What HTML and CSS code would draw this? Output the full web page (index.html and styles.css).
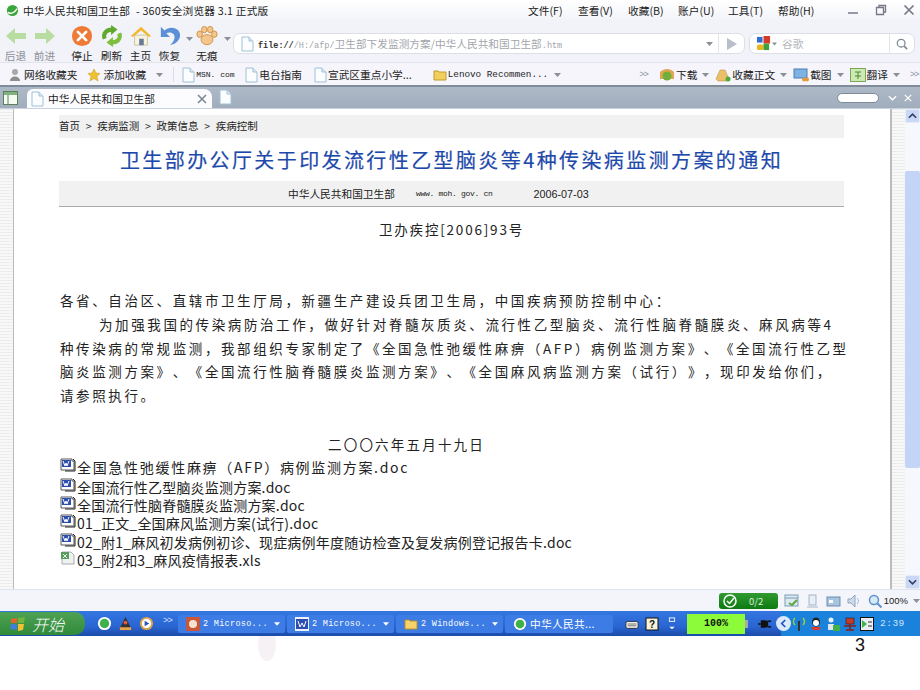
FILE: index.html
```html
<!DOCTYPE html>
<html lang="zh-CN">
<head>
<meta charset="UTF-8">
<title>中华人民共和国卫生部</title>
<link rel="stylesheet" href="styles.css">
</head>
<body>
<svg class="defs" width="0" height="0">
  <symbol id="doc" viewBox="0 0 14 16"><path d="M2 1h7l4 4v10H2z" fill="#fbfdff" stroke="#9fc0d8"/><path d="M9 1v4h4" fill="#dcebf5" stroke="#9fc0d8"/></symbol>
  <symbol id="word" viewBox="0 0 16 14"><path d="M1 1h11v2h2v9H1z" fill="#fff" stroke="#555"/><rect x="2" y="2" width="9" height="7" fill="#2d4fb0"/><path d="M3 3l2 5 1-3 1 3 2-5" fill="none" stroke="#fff"/><path d="M13 1l2 2v10H5" fill="none" stroke="#222"/></symbol>
  <symbol id="xls" viewBox="0 0 16 14"><path d="M2 1h9l3 3v9H2z" fill="#eef2ee" stroke="#aab"/><rect x="1" y="1" width="8" height="7" fill="#5b9a62"/><path d="M3 3l4 4M7 3l-4 4" stroke="#dfd"/></symbol>
  <symbol id="caret" viewBox="0 0 7 4"><path d="M0 0h7L3.500 4z" fill="currentColor"/></symbol>
</svg>

<div class="screen">

  <div class="titlebar">
    <svg class="title-logo" viewBox="0 0 14 14"><circle cx="7" cy="7" r="6" fill="#3aa53a"/><path d="M2 9c3 2 7 1 10-4" fill="none" stroke="#fff" stroke-width="1.500"/></svg>
    <span class="title-site">中华人民共和国卫生部</span>
    <span class="title-app">- 360安全浏览器 3.1 正式版</span>
    <div class="menu">
      <span>文件(F)</span><span>查看(V)</span><span>收藏(B)</span><span>账户(U)</span><span>工具(T)</span><span>帮助(H)</span>
    </div>
    <div class="winbtns">
      <svg viewBox="0 0 12 12"><path d="M1 9h10" stroke="#778" stroke-width="1.500"/></svg>
      <svg viewBox="0 0 12 12"><path d="M1.500 3.500h7v7h-7zM4 3V1.500h6.500V8H9" fill="none" stroke="#778" stroke-width="1.300"/></svg>
      <svg viewBox="0 0 12 12"><path d="M1.500 1.500l9 9M10.500 1.500l-9 9" stroke="#778" stroke-width="1.700"/></svg>
    </div>
  </div>

  <div class="toolbar">
    <div class="navbtn off">
      <svg viewBox="0 0 24 20"><path d="M11 2L2 10l9 8v-5h11V7H11z" fill="#b9dca0"/></svg>
      <span>后退</span>
    </div>
    <div class="navbtn off">
      <svg viewBox="0 0 24 20"><path d="M13 2l9 8-9 8v-5H2V7h11z" fill="#b9dca0"/></svg>
      <span>前进</span>
    </div>
    <div class="navbtn stop">
      <svg viewBox="0 0 24 24"><circle cx="12" cy="12" r="11" fill="#ee7a35"/><path d="M7.500 7.500l9 9M16.500 7.500l-9 9" stroke="#fff" stroke-width="3" stroke-linecap="round"/></svg>
      <span>停止</span>
    </div>
    <div class="navbtn">
      <svg viewBox="0 0 24 24"><path d="M4 15C2 9 6 5 12 5" fill="none" stroke="#5fa92c" stroke-width="4.500"/><path d="M11 0l7 5-7 6z" fill="#5fa92c"/><path d="M20 9c2 6-2 10-8 10" fill="none" stroke="#7cc03d" stroke-width="4.500"/><path d="M13 13l-7 6 7 5z" fill="#7cc03d"/></svg>
      <span>刷新</span>
    </div>
    <div class="navbtn">
      <svg viewBox="0 0 24 24"><path d="M5 11v11h14V11z" fill="#f8f3dc" stroke="#c9c2a0"/><rect x="10" y="15" width="5" height="7" fill="#667a99"/><path d="M1 12L12 2l11 10-2 1-9-7-9 7z" fill="#f2b92e"/></svg>
      <span>主页</span>
    </div>
    <div class="navbtn">
      <svg viewBox="0 0 24 24"><path d="M2 2v11h10L8 9c4-2 9 0 9 4 0 4-3 7-5 9 6-1 11-5 11-11C23 4 13 0 6 6z" fill="#5b8fd6"/></svg>
      <span>恢复</span>
    </div>
    <svg class="caret caret-nav"><use href="#caret"/></svg>
    <div class="navbtn incognito">
      <svg viewBox="0 0 24 24"><ellipse cx="12" cy="16" rx="6.500" ry="5.500" fill="#f3c68c" stroke="#cf8f45"/><ellipse cx="4" cy="10" rx="3" ry="3.500" fill="#f3c68c" stroke="#cf8f45"/><ellipse cx="20" cy="10" rx="3" ry="3.500" fill="#f3c68c" stroke="#cf8f45"/><ellipse cx="9" cy="5" rx="3" ry="3.500" fill="#f3c68c" stroke="#cf8f45"/><ellipse cx="15.500" cy="5" rx="3" ry="3.500" fill="#f3c68c" stroke="#cf8f45"/></svg>
      <span>无痕</span>
    </div>
    <svg class="caret caret-nav"><use href="#caret"/></svg>
    <div class="address">
      <svg class="doc-ico"><use href="#doc"/></svg>
      <span class="url"><b>file://</b><em>/H:/afp/</em>卫生部下发监测方案/中华人民共和国卫生部<em>.htm</em></span>
      <svg class="caret caret-addr"><use href="#caret"/></svg>
      <div class="go"><svg viewBox="0 0 10 12"><path d="M0 0l10 6-10 6z" fill="#b6bfca"/></svg></div>
    </div>
    <div class="search">
      <svg class="g-logo" viewBox="0 0 16 16"><rect x="1" y="1" width="6" height="6" fill="#2f6fd1"/><rect x="8" y="0" width="7" height="8" fill="#d83a2a"/><rect x="1" y="9" width="7" height="6" fill="#e9b61b" rx="2"/><rect x="8" y="8" width="6" height="7" fill="#3fa03c"/></svg>
      <svg class="caret caret-g"><use href="#caret"/></svg>
      <span>谷歌</span>
      <div class="lens"><svg viewBox="0 0 14 14"><circle cx="6" cy="6" r="4.500" fill="none" stroke="#7d8a96" stroke-width="1.500"/><path d="M9.500 9.500l3.500 3.500" stroke="#7d8a96" stroke-width="2"/></svg></div>
    </div>
  </div>

  <div class="favbar">
    <svg class="fav-ico" viewBox="0 0 14 14"><circle cx="7" cy="4" r="3" fill="#a9a9a9"/><path d="M2 13c0-6 10-6 10 0z" fill="#8e8e8e"/></svg>
    <span class="fav">网络收藏夹</span>
    <svg class="fav-ico star" viewBox="0 0 14 14"><path d="M7 1l2 4 4 .5-3 3 1 4.500-4-2.500L3 13l1-4.500-3-3L5 5z" fill="#f0c030" stroke="#c99a10" stroke-width=".5"/></svg>
    <span class="fav">添加收藏</span>
    <svg class="caret caret-add"><use href="#caret"/></svg>
    <i class="sep"></i>
    <svg class="doc-ico"><use href="#doc"/></svg><span class="fav msn">MSN. com</span>
    <svg class="doc-ico fav-doc"><use href="#doc"/></svg><span class="fav">电台指南</span>
    <svg class="doc-ico fav-doc"><use href="#doc"/></svg><span class="fav">宣武区重点小学...</span>
    <svg class="fav-ico folder" viewBox="0 0 14 12"><path d="M1 2h4l1 1h7v8H1z" fill="#f1cf5e" stroke="#c29a2b"/></svg>
    <span class="fav lenovo">Lenovo Recommen...</span>
    <svg class="caret caret-lenovo"><use href="#caret"/></svg>
    <span class="more more-a">&gt;&gt;</span>
    <div class="tools">
      <svg class="tool-ico" viewBox="0 0 16 14"><path d="M1 4c4-4 10-4 14 0v7H1z" fill="#e2a552"/><circle cx="8" cy="8" r="4.500" fill="#6fb03a"/></svg><span>下载</span><svg class="caret"><use href="#caret"/></svg>
      <svg class="tool-ico" viewBox="0 0 16 14"><path d="M5 2h5l4 9-2 2H3l-2-2z" fill="#e9bf6a" stroke="#b98a32" stroke-width=".5"/><circle cx="13" cy="11" r="2.500" fill="#4fa83a"/></svg><span>收藏正文</span><svg class="caret"><use href="#caret"/></svg>
      <svg class="tool-ico" viewBox="0 0 16 14"><rect x="1" y="1" width="13" height="9" fill="#7db2e2" stroke="#4d7fb5"/><circle cx="11" cy="11.500" r="2" fill="#e39a3a"/><circle cx="14" cy="11.500" r="2" fill="#e39a3a"/></svg><span>截图</span><svg class="caret"><use href="#caret"/></svg>
      <svg class="tool-ico" viewBox="0 0 16 14"><rect x=".5" y=".5" width="15" height="13" fill="#cfe9b2" stroke="#7aa85a"/><path d="M5 4h6M8 4v7M5 8h6" stroke="#4a8a35"/></svg><span>翻译</span><svg class="caret"><use href="#caret"/></svg>
      <span class="more">&gt;&gt;</span>
    </div>
  </div>

  <div class="tabbar">
    <svg class="panel-ico" viewBox="0 0 15 14"><rect x=".5" y=".5" width="14" height="13" fill="#f6fbf2" stroke="#5c7f5c"/><rect x="1" y="1" width="13" height="3" fill="#7fb27f"/><path d="M5 4v9" stroke="#5c7f5c"/></svg>
    <div class="tab">
      <svg class="doc-ico"><use href="#doc"/></svg>
      <span>中华人民共和国卫生部</span>
      <svg class="tab-x" viewBox="0 0 10 10"><path d="M1 1l8 8M9 1L1 9" stroke="#7b8794" stroke-width="1.600"/></svg>
    </div>
    <svg class="doc-ico newtab"><use href="#doc"/></svg>
    <div class="tab-right">
      <i class="pill"></i>
      <svg viewBox="0 0 10 6" class="chev"><path d="M1 1l4 4 4-4" fill="none" stroke="#fff" stroke-width="1.500"/></svg>
      <svg viewBox="0 0 10 10" class="closeall"><path d="M1 1l8 8M9 1L1 9" stroke="#fff" stroke-width="1.500"/></svg>
    </div>
  </div>

  <div class="viewport">
    <div class="gutter"></div>
    <div class="page">
      <div class="crumbs">首页 &nbsp;&gt;&nbsp; 疾病监测 &nbsp;&gt;&nbsp; 政策信息 &nbsp;&gt;&nbsp; 疾病控制</div>
      <h1>卫生部办公厅关于印发流行性乙型脑炎等4种传染病监测方案的通知</h1>
      <div class="source"><span>中华人民共和国卫生部</span><span class="site">www. moh. gov. cn</span><span class="date">2006-07-03</span></div>
      <p class="docno">卫办疾控[2006]93号</p>
      <div class="body-text">
        <p>各省、自治区、直辖市卫生厅局，新疆生产建设兵团卫生局，中国疾病预防控制中心：</p>
        <p class="indent">为加强我国的传染病防治工作，做好针对脊髓灰质炎、流行性乙型脑炎、流行性脑脊髓膜炎、麻风病等4</p>
        <p>种传染病的常规监测，我部组织专家制定了《全国急性弛缓性麻痹（AFP）病例监测方案》、《全国流行性乙型</p>
        <p>脑炎监测方案》、《全国流行性脑脊髓膜炎监测方案》、《全国麻风病监测方案（试行）》，现印发给你们，</p>
        <p>请参照执行。</p>
      </div>
      <p class="signdate">二〇〇六年五月十九日</p>
      <ul class="files">
        <li class="first"><svg><use href="#word"/></svg>全国急性弛缓性麻痹（AFP）病例监测方案.doc</li>
        <li><svg><use href="#word"/></svg>全国流行性乙型脑炎监测方案.doc</li>
        <li><svg><use href="#word"/></svg>全国流行性脑脊髓膜炎监测方案.doc</li>
        <li><svg><use href="#word"/></svg>01_正文_全国麻风监测方案(试行).doc</li>
        <li><svg><use href="#word"/></svg>02_附1_麻风初发病例初诊、现症病例年度随访检查及复发病例登记报告卡.doc</li>
        <li><svg><use href="#xls"/></svg>03_附2和3_麻风疫情报表.xls</li>
      </ul>
    </div>
    <div class="stripe"></div>
    <div class="scrollbar">
      <div class="sb-btn"><svg viewBox="0 0 10 6"><path d="M1 5l4-4 4 4" fill="none" stroke="#333f66" stroke-width="1.800"/></svg></div>
      <div class="sb-track"><div class="sb-thumb"></div></div>
      <div class="sb-btn"><svg viewBox="0 0 10 6"><path d="M1 1l4 4 4-4" fill="none" stroke="#333f66" stroke-width="1.800"/></svg></div>
    </div>
  </div>

  <div class="statusbar">
    <div class="safe">
      <svg viewBox="0 0 14 14"><circle cx="7" cy="7" r="6" fill="none" stroke="#fff" stroke-width="1.500"/><path d="M4 7l2.500 2.500L11 4" fill="none" stroke="#fff" stroke-width="1.500"/></svg>
      <span>0/2</span>
    </div>
    <svg class="st-ico" viewBox="0 0 15 14"><rect x="1" y="1" width="13" height="11" fill="#dceaf2" stroke="#7e9cb5"/><path d="M1 4h13" stroke="#7e9cb5"/><path d="M5 9l3 2 5-5" stroke="#5aa83a" stroke-width="2" fill="none"/></svg>
    <svg class="st-ico" viewBox="0 0 15 14"><rect x="4" y="1" width="7" height="10" fill="#e8eef5" stroke="#a4b4c6"/><path d="M2 13h11" stroke="#a4b4c6"/></svg>
    <svg class="st-ico" viewBox="0 0 15 14"><rect x="1" y="3" width="13" height="9" fill="#a9c4de" stroke="#6a8cae"/><rect x="3" y="6" width="4" height="3" fill="#fff"/></svg>
    <svg class="st-ico" viewBox="0 0 15 14"><path d="M1 5h3l4-4v12L4 9H1z" fill="#cfdbe8" stroke="#8ea6bf"/><path d="M10 4c2 2 2 4 0 6" fill="none" stroke="#a7bacd"/></svg>
    <svg class="st-ico zoom-ico" viewBox="0 0 15 14"><circle cx="6" cy="6" r="4.500" fill="#d7e8f7" stroke="#5a93cc" stroke-width="1.500"/><path d="M9.500 9.500l4 4" stroke="#5a93cc" stroke-width="2"/></svg>
    <span class="zoom-val">100%</span>
    <svg class="caret caret-zoom"><use href="#caret"/></svg>
  </div>

  <div class="taskbar">
    <div class="start">
      <svg viewBox="0 0 16 16"><path d="M1 3l6-1v5H1z" fill="#e8632c"/><path d="M8 2l7-1-1 6H8z" fill="#6fb43c"/><path d="M1 8h6v6l-7-1z" fill="#3f7fd8"/><path d="M8 8h6l-1 6-5 1z" fill="#f3c230"/></svg>
      <span>开始</span>
    </div>
    <div class="quick">
      <svg viewBox="0 0 16 16"><circle cx="8" cy="8" r="7" fill="#fff"/><circle cx="8" cy="8" r="5" fill="#3fb04a"/></svg>
      <svg viewBox="0 0 16 16"><path d="M8 1l6 12H2z" fill="#333"/><path d="M2 12h12v3H2z" fill="#e8a24a"/><circle cx="8" cy="7" r="2" fill="#e85a3a"/></svg>
      <svg viewBox="0 0 16 16"><circle cx="8" cy="8" r="7" fill="#d9a24a"/><circle cx="8" cy="8" r="5" fill="#fff"/><path d="M6 5l5 3-5 3z" fill="#2a55b0"/></svg>
    </div>
    <span class="more task-more">&gt;&gt;</span>
    <div class="tasks">
      <div class="task"><svg viewBox="0 0 14 14"><rect width="14" height="14" fill="#c8563a"/><circle cx="7" cy="7" r="4" fill="#f5e3d0"/></svg><span>2 Microso...</span><svg class="caret caret-task"><use href="#caret"/></svg></div>
      <div class="task"><svg viewBox="0 0 14 14"><rect width="14" height="14" fill="#eef2fa"/><rect x="1" y="2" width="12" height="10" fill="#2d4fb0"/><path d="M3 4l2 6 2-4 2 4 2-6" fill="none" stroke="#fff"/></svg><span>2 Microso...</span><svg class="caret caret-task"><use href="#caret"/></svg></div>
      <div class="task"><svg viewBox="0 0 14 12"><path d="M1 2h4l1 1h7v8H1z" fill="#f5d36a" stroke="#b8912a"/></svg><span>2 Windows...</span><svg class="caret caret-task"><use href="#caret"/></svg></div>
      <div class="task task-cn"><svg viewBox="0 0 16 16"><circle cx="8" cy="8" r="7" fill="#fff"/><circle cx="8" cy="8" r="5" fill="#3fb04a"/></svg><span>中华人民共...</span></div>
    </div>
    <div class="mid-icons">
      <svg viewBox="0 0 16 12"><rect x="1" y="3" width="14" height="8" rx="2" fill="#eee" stroke="#222"/><path d="M3 6h10M3 8h10" stroke="#666"/></svg>
      <svg viewBox="0 0 14 14"><rect x="1" y="1" width="12" height="12" fill="#f6f3d8" stroke="#111"/><text x="7" y="11" text-anchor="middle" class="qm">?</text></svg>
      <svg viewBox="0 0 12 16"><rect x="3" y="1" width="6" height="4" fill="none" stroke="#fff"/><path d="M3 11h6l-3 3z" fill="#fff"/></svg>
    </div>
    <div class="battery">100%</div><i class="nub"></i>
    <svg class="plug" viewBox="0 0 16 12"><path d="M1 6h3M11 3h4M11 9h4" stroke="#111" stroke-width="1.500"/><path d="M4 2h4c3 0 4 2 4 4s-1 4-4 4H4z" fill="#111"/></svg>
    <div class="tray">
      <div class="tray-open"><svg viewBox="0 0 8 10"><path d="M6 1L2 5l4 4" fill="none" stroke="#1e58c0" stroke-width="2"/></svg></div>
      <svg viewBox="0 0 14 14"><path d="M7 4v10" stroke="#333" stroke-width="2"/><path d="M3 1C1 3 1 6 3 8M11 1c2 2 2 5 0 7" fill="none" stroke="#9ccc3c" stroke-width="1.500"/></svg>
      <svg viewBox="0 0 14 14"><ellipse cx="7" cy="5" rx="4" ry="4.500" fill="#222"/><ellipse cx="7" cy="6" rx="3" ry="3" fill="#fff"/><path d="M2 10h10l-2 3H4z" fill="#e23a2a"/></svg>
      <svg viewBox="0 0 14 14"><circle cx="5" cy="3" r="2.500" fill="#e8eef5"/><path d="M2 13V7h6v6z" fill="#dfe6ef"/><rect x="7" y="8" width="7" height="6" fill="#3fb04a"/></svg>
      <svg viewBox="0 0 14 14"><rect x="3" y="1" width="8" height="6" fill="#c43a2a" stroke="#111" stroke-width=".5"/><path d="M1 9h12M7 7v6M3 13h8" stroke="#8a1f14" stroke-width="1.500"/></svg>
      <svg viewBox="0 0 14 14"><rect width="14" height="14" fill="#111"/><rect x="1" y="1" width="12" height="12" fill="#e8eef5"/><path d="M2 3l5 4-5 4z" fill="#3fb04a"/><path d="M8 5h4M8 9h4" stroke="#333"/></svg>
      <span class="clock">2:39</span>
    </div>
  </div>

  <div class="foot">
    <i class="ghost"></i>
    <span class="slide-no">3</span>
  </div>

</div>
</body>
</html>
```

FILE: styles.css
```css
html, body {
  margin: 0;
  padding: 0;
  background: white;
}

body {
  font-family: "Noto Sans CJK SC", "Liberation Sans", sans-serif;
  color: #222;
  text-spacing-trim: space-all;
}

p, h1, ul {
  margin: 0;
  padding: 0;
}

.defs {
  position: absolute;
}

.screen {
  width: 920px;
  height: 690px;
  display: flex;
  flex-direction: column;
  overflow: hidden;
  position: relative;
}

.caret {
  width: 7px;
  height: 4px;
  color: #8b8f98;
  flex: none;
}

.doc-ico {
  width: 14px;
  height: 16px;
  flex: none;
}

.more {
  font-size: 9px;
  color: #8f96a3;
  font-family: "Liberation Mono", monospace;
  letter-spacing: -1px;
}

/* title bar */
.titlebar {
  height: 20px;
  display: flex;
  align-items: center;
  padding-left: 6px;
  font-size: 10.700px;
  background: linear-gradient(#fff, #f3f4f9);
  white-space: nowrap;
}

.title-logo {
  width: 13px;
  height: 13px;
  margin-right: 4px;
}

.title-app {
  margin-left: 6px;
  letter-spacing: .2px;
}

.menu {
  margin-left: auto;
  margin-right: 19px;
  display: flex;
  width: 300px;
}

.menu span {
  width: 50px;
  flex: none;
}

.winbtns {
  display: flex;
  gap: 16px;
  margin-right: 5px;
}

.winbtns svg {
  width: 12px;
  height: 12px;
}

/* toolbar */
.toolbar {
  height: 43px;
  display: flex;
  align-items: center;
  padding: 5px 0 0 1px;
  background: #f2f3f9;
  border-bottom: 1px solid #e2e3ea;
  box-sizing: border-box;
}

.navbtn {
  width: 29px;
  display: flex;
  flex-direction: column;
  align-items: center;
  font-size: 10.700px;
  line-height: 13px;
  flex: none;
  gap: 2px;
}

.navbtn svg {
  width: 24px;
  height: 22px;
}

.navbtn.off {
  color: #8c9099;
}

.navbtn.stop {
  width: 30px;
  margin-left: 8px;
}

.navbtn.incognito {
  width: 30px;
  margin-left: -1px;
}

.caret-nav {
  margin: 0 0 10px 2px;
}

.address {
  width: 512px;
  height: 21px;
  margin-left: 2px;
  background: white;
  border: 1px solid #dcdfe7;
  border-radius: 7px;
  display: flex;
  align-items: center;
  box-sizing: border-box;
  padding-left: 6px;
  font-size: 10.700px;
}

.url {
  margin-left: 4px;
  color: #a2a6ab;
  flex: 1;
  white-space: nowrap;
  overflow: hidden;
}

.url b, .url em {
  font-style: normal;
  font-family: "Liberation Mono", monospace;
  font-size: 8.500px;
}

.url b {
  color: #333;
}

.caret-addr {
  margin-right: 5px;
}

.go {
  width: 25px;
  height: 100%;
  border-left: 1px solid #e3e5ea;
  display: flex;
  align-items: center;
  justify-content: center;
}

.go svg {
  width: 10px;
  height: 12px;
}

.search {
  width: 166px;
  height: 21px;
  margin-left: 4px;
  background: white;
  border: 1px solid #dcdfe7;
  border-radius: 7px;
  box-sizing: border-box;
  display: flex;
  align-items: center;
  padding-left: 6px;
  font-size: 10.700px;
  color: #b3b6bb;
}

.g-logo {
  width: 15px;
  height: 15px;
}

.caret-g {
  width: 5px;
  margin: 0 5px 0 1px;
}

.lens {
  margin-left: auto;
  width: 24px;
  height: 100%;
  border-left: 1px solid #e3e5ea;
  display: flex;
  align-items: center;
  justify-content: center;
}

.lens svg {
  width: 12px;
  height: 12px;
}

/* favourites bar */
.favbar {
  height: 24px;
  display: flex;
  align-items: center;
  padding: 1px 0 0 8px;
  font-size: 10.700px;
  background: #f5f5fb;
  box-sizing: border-box;
  border-bottom: 2px solid #7f8b99;
  white-space: nowrap;
}

.fav-ico {
  width: 14px;
  height: 14px;
  flex: none;
}

.fav {
  margin-left: 2px;
}

.star {
  margin-left: 10px;
}

.msn {
  margin-left: 1px;
  font-family: "Liberation Mono", monospace;
  font-size: 8px;
  width: 37px;
}

.lenovo {
  margin-left: 1px;
  font-family: "Liberation Mono", monospace;
  font-size: 9.300px;
}

.caret-add {
  margin-left: 10px;
}

.sep {
  width: 1px;
  height: 15px;
  background: #dadbe3;
  margin: 0 7px 0 10px;
}

.fav-doc {
  margin-left: 11px;
}

.fav-doc + .fav {
  margin-left: 1px;
}

.folder {
  margin-left: 21px;
}

.caret-lenovo {
  margin-left: 6px;
}

.more-a {
  margin-left: 78px;
}

.tools {
  margin-left: 5px;
  display: flex;
  align-items: center;
}

.tool-ico {
  width: 16px;
  height: 14px;
  margin-left: 6px;
}

.tools span {
  margin-left: 1px;
}

.tools .caret {
  margin-left: 5px;
}

.tools .more {
  margin-left: 10px;
}

/* tab bar */
.tabbar {
  height: 22px;
  display: flex;
  align-items: flex-end;
  background: linear-gradient(#aeb9c7, #a0adbc);
  padding-left: 3px;
  font-size: 10.700px;
  border-bottom: 1px solid #c9d2dc;
  box-sizing: border-box;
}

.panel-ico {
  width: 15px;
  height: 14px;
  margin: 0 9px 3px 0;
}

.tab {
  width: 185px;
  height: 19px;
  background: #fcfcfe;
  border-radius: 6px 8px 0 0;
  display: flex;
  align-items: center;
  padding-left: 3px;
  box-sizing: border-box;
}

.tab span {
  margin-left: 4px;
}

.tab-x {
  width: 10px;
  height: 10px;
  margin-left: auto;
  margin-right: 5px;
}

.newtab {
  margin: 0 0 3px 6px;
}

.tab-right {
  margin-left: auto;
  display: flex;
  align-items: center;
  height: 100%;
  padding-right: 8px;
}

.pill {
  width: 40px;
  height: 8px;
  border-radius: 5px;
  background: white;
  border: 1px solid #7f8b99;
}

.chev {
  width: 9px;
  height: 6px;
  margin-left: 9px;
}

.closeall {
  width: 8px;
  height: 8px;
  margin-left: 7px;
}

/* page area */
.viewport {
  height: 481px;
  display: flex;
  border-bottom: 1px solid #dfe5ee;
  box-sizing: border-box;
}

.gutter {
  width: 14px;
  background: repeating-linear-gradient(#ececec 0 1px, #f8f8f8 1px 3px);
  border-right: 1px solid #bbb;
  box-sizing: border-box;
  flex: none;
}

.page {
  flex: 1;
  padding: 6px 46px 0 45px;
  white-space: nowrap;
  overflow: hidden;
  font-size: 13.500px;
  min-width: 0;
}

.crumbs {
  height: 23px;
  line-height: 21px;
  background: #f1f1f1;
  font-size: 10.500px;
  word-spacing: .5px;
}

h1 {
  height: 43px;
  line-height: 44px;
  font-size: 20px;
  font-weight: normal;
  color: #1d49ab;
  text-align: center;
  letter-spacing: 2.400px;
  -webkit-text-stroke: .2px #1d49ab;
}

.source {
  height: 26px;
  box-sizing: border-box;
  background: #f1f1f1;
  border-bottom: 1px solid #aaa;
  display: flex;
  align-items: center;
  font-size: 10.700px;
  padding-left: 229px;
}

.site {
  margin-left: 21px;
  font-family: "Liberation Mono", monospace;
  font-size: 8px;
  letter-spacing: -.3px;
}

.date {
  margin-left: 41px;
  font-family: "Liberation Sans", sans-serif;
  font-size: 10.800px;
}

.docno {
  margin-top: 12px;
  text-align: center;
  height: 20px;
  line-height: 20px;
  letter-spacing: 1.800px;
}

.body-text {
  margin-top: 50px;
  letter-spacing: 2.600px;
}

.body-text p {
  height: 23.800px;
  line-height: 23.800px;
  margin-left: 1px;
}

.body-text .indent {
  padding-left: 39px;
}

.signdate {
  margin: 25px 0 0 269px;
  letter-spacing: 2.200px;
  height: 22px;
  line-height: 22px;
}

.files {
  list-style: none;
  margin-top: 1px;
}

.files li {
  height: 18.200px;
  line-height: 18.200px;
  display: flex;
  align-items: center;
  font-size: 14px;
  letter-spacing: .2px;
}

.files li.first {
  height: 22px;
  letter-spacing: 1.700px;
}

.files svg {
  width: 16px;
  height: 14px;
  flex: none;
  margin: -4px 1px 0 1px;
}

.stripe {
  width: 15px;
  flex: none;
  border-left: 2px solid #bbb;
  box-sizing: border-box;
  background: repeating-linear-gradient(#ececec 0 1px, #f8f8f8 1px 3px);
}

.scrollbar {
  width: 15px;
  flex: none;
  display: flex;
  flex-direction: column;
  background: #f6f8fd;
}

.sb-btn {
  height: 14px;
  flex: none;
  background: #c9d8f4;
  border: 1px solid #e4ecfa;
  box-sizing: border-box;
  border-radius: 2px;
  display: flex;
  align-items: center;
  justify-content: center;
}

.sb-btn svg {
  width: 9px;
  height: 6px;
}

.sb-track {
  flex: 1;
  padding-top: 48px;
}

.sb-thumb {
  height: 297px;
  background: #c3d4f6;
  border-radius: 2px;
}

/* status bar */
.statusbar {
  height: 21px;
  background: #f4f5fb;
  display: flex;
  align-items: center;
  padding-left: 719px;
  font-size: 9.500px;
  flex: none;
}

.safe {
  width: 59px;
  height: 16px;
  background: linear-gradient(#2f9a2f, #0d7a12);
  border-radius: 3px;
  display: flex;
  align-items: center;
  color: #dfeedd;
  padding-left: 4px;
  box-sizing: border-box;
}

.safe svg {
  width: 14px;
  height: 14px;
}

.safe span {
  margin-left: 12px;
}

.st-ico {
  width: 15px;
  height: 14px;
  margin-left: 6px;
}

.zoom-ico {
  margin-left: 6px;
}

.zoom-val {
  margin-left: 1px;
  font-family: "Liberation Sans", sans-serif;
}

.caret-zoom {
  margin-left: 5px;
}

/* taskbar */
.taskbar {
  height: 25px;
  flex: none;
  background: linear-gradient(#3476e0 0, #2a66d4 60%, #1b4ca8 100%);
  display: flex;
  align-items: center;
  color: white;
  font-size: 9.500px;
  position: relative;
  z-index: 1;
}

.start {
  width: 85px;
  height: 23px;
  flex: none;
  background: linear-gradient(#4fa253, #2f8a3a);
  border-radius: 0 10px 10px 0;
  display: flex;
  align-items: center;
  padding-left: 10px;
  box-sizing: border-box;
  font-size: 16px;
  font-style: italic;
  font-weight: 300;
}

.start svg {
  width: 16px;
  height: 16px;
  margin-right: 6px;
}

.quick {
  display: flex;
  gap: 6px;
  margin-left: 12px;
}

.quick svg {
  width: 15px;
  height: 15px;
}

.task-more {
  color: #cfe0f8;
  margin: -6px 0 0 9px;
  width: 15px;
}

.tasks {
  display: flex;
  gap: 2px;
  width: 437px;
  flex: none;
}

.task {
  width: 107px;
  height: 18px;
  background: #3c7ce4;
  border-radius: 2px;
  display: flex;
  align-items: center;
  padding-left: 8px;
  box-sizing: border-box;
  font-family: "Liberation Mono", monospace;
  font-size: 8.500px;
  flex: none;
  white-space: nowrap;
  letter-spacing: .3px;
}

.task svg:first-child {
  width: 14px;
  height: 14px;
  margin-right: 3px;
  flex: none;
}

.caret-task {
  color: white;
  margin-left: auto;
  margin-right: 5px;
  width: 6px;
}

.task-cn {
  font-family: "Noto Sans CJK SC", sans-serif;
  font-size: 10.700px;
  width: 108px;
}

.mid-icons {
  display: flex;
  align-items: center;
  gap: 6px;
  margin-left: 10px;
}

.mid-icons svg {
  width: 14px;
  height: 14px;
}

.qm {
  font-size: 10px;
  font-weight: bold;
  fill: #111;
  font-family: "Liberation Sans", sans-serif;
}

.battery {
  width: 58px;
  height: 20px;
  line-height: 20px;
  margin-left: 8px;
  background: #8cfb3a;
  color: #111;
  text-align: center;
  font-family: "Liberation Mono", monospace;
  font-weight: bold;
  font-size: 10px;
  flex: none;
}

.nub {
  width: 3px;
  height: 8px;
  background: #aaa;
}

.plug {
  width: 15px;
  height: 12px;
  margin-left: 9px;
  flex: none;
}

.tray {
  flex: 1;
  height: 100%;
  margin-left: 9px;
  background: #1b82dc;
  display: flex;
  align-items: center;
  gap: 3px;
}

.tray svg {
  width: 14px;
  height: 14px;
  flex: none;
}

.tray-open {
  width: 15px;
  height: 15px;
  margin-left: -5px;
  margin-right: -2px;
  border-radius: 50%;
  background: #dbe9fb;
  display: flex;
  align-items: center;
  justify-content: center;
}

.tray-open svg {
  width: 7px;
  height: 9px;
}

.clock {
  margin-left: 3px;
  color: #d4e4fa;
  font-family: "Liberation Mono", monospace;
  letter-spacing: .5px;
}

/* slide footer */
.foot {
  flex: 1;
  position: relative;
  display: flex;
  justify-content: flex-end;
  padding-right: 55px;
}

.slide-no {
  font-family: "Liberation Sans", sans-serif;
  font-size: 18px;
  line-height: 20px;
  margin-top: -1px;
  color: #111;
}

.ghost {
  position: absolute;
  left: 258px;
  top: -8px;
  width: 18px;
  height: 33px;
  border-radius: 50%;
  background: #f5f1f5;
}
```
